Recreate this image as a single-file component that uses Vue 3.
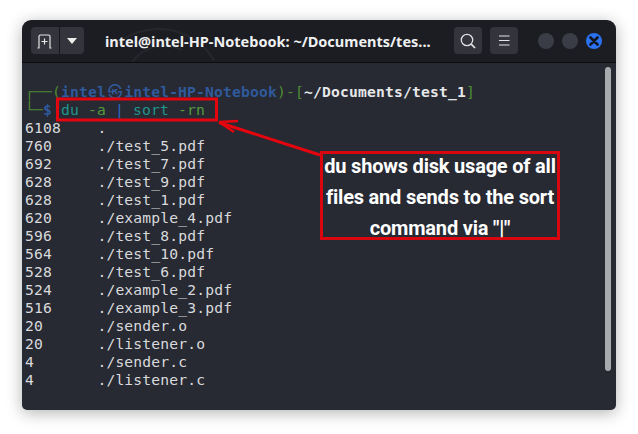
<script setup>
const rows = [
  ['6108', '.'],
  ['760', './test_5.pdf'],
  ['692', './test_7.pdf'],
  ['628', './test_9.pdf'],
  ['628', './test_1.pdf'],
  ['620', './example_4.pdf'],
  ['596', './test_8.pdf'],
  ['564', './test_10.pdf'],
  ['528', './test_6.pdf'],
  ['524', './example_2.pdf'],
  ['516', './example_3.pdf'],
  ['20', './sender.o'],
  ['20', './listener.o'],
  ['4', './sender.c'],
  ['4', './listener.c'],
]
</script>

<template>
  <div class="page">
    <div class="window">
      <header class="titlebar">
        <svg class="watermark" width="110" height="42" viewBox="0 0 110 42" fill="none" stroke="#26272d" stroke-width="2">
          <path d="M2 26C22 8 52 4 76 16c12 6 20 14 26 24" />
          <path d="M20 42C32 26 52 22 70 30" />
        </svg>
        <div class="split">
          <button class="seg seg-new" aria-label="New tab">
            <svg width="18" height="16" viewBox="0 0 18 16" fill="none" stroke="#e4e5e7" stroke-width="1.2">
              <path d="M1.5 15 h1.5 V3.5 a1.5 1.5 0 0 1 1.5-1.5 h8 a1.5 1.5 0 0 1 1.5 1.5 V15 h1.5" />
              <path d="M8.5 5.5 v6 M5.5 8.5 h6" />
            </svg>
          </button>
          <button class="seg seg-drop" aria-label="Tab menu">
            <svg width="10" height="6" viewBox="0 0 10 6"><path d="M0 0h10L5 6z" fill="#eceded" /></svg>
          </button>
        </div>
        <div class="title">intel@intel-HP-Notebook: ~/Documents/tes...</div>
        <button class="tool" aria-label="Search">
          <svg width="16" height="16" viewBox="0 0 16 16" fill="none" stroke="#dfe0e2" stroke-width="1.3">
            <circle cx="7" cy="7" r="5.7" />
            <path d="M11.2 11.2 15 15" stroke-width="1.7" />
          </svg>
        </button>
        <button class="tool tool-menu" aria-label="Menu">
          <svg width="12" height="11" viewBox="0 0 12 11" stroke="#e4e5e7" stroke-width="1.2">
            <path d="M1 1h10.5M1 5.5h10.5M1 10h10.5" />
          </svg>
        </button>
        <div class="controls">
          <span class="dot"></span>
          <span class="dot"></span>
          <span class="dot dot-close">
            <svg width="10" height="10" viewBox="0 0 10 10" stroke="#12141c" stroke-width="2.6" stroke-linecap="round">
              <path d="M1.5 1.5l7 7M8.5 1.5l-7 7" />
            </svg>
          </span>
        </div>
      </header>

      <main class="terminal">
        <div class="scrollbar"></div>
        <div class="output">
          <div class="line"><span class="g">┌──(</span><span class="b">intel<span class="skull">㉿</span>intel-HP-Notebook</span><span class="g">)-[</span><span class="w">~/Documents/test_1</span><span class="g">]</span></div>
          <div class="line"><span class="g">└─</span><span class="b">$</span> <span class="t">du</span> <span class="l">-a</span> <span class="p">|</span> <span class="t">sort</span> <span class="l">-rn</span></div>
          <div v-for="row in rows" :key="row[1]" class="line row">
            <span class="size">{{ row[0] }}</span><span>{{ row[1] }}</span>
          </div>
        </div>
      </main>
    </div>

    <svg class="arrow" width="638" height="434" viewBox="0 0 638 434" fill="none" stroke="#e4060f">
      <rect x="57.5" y="99" width="159" height="21" stroke-width="3" />
      <path d="M320 155 219 122.5" stroke-width="3" />
      <path d="M219 122 238 121M219 122 234 132" stroke-width="2.5" />
    </svg>

    <div class="note">
      <div class="note-text">
        <div>du shows disk usage of all</div>
        <div>files and sends to the sort</div>
        <div>command via "|"</div>
      </div>
    </div>
  </div>
</template>

<style scoped>
.page {
  position: relative;
  width: 638px;
  height: 434px;
  padding: 20px 22px 24px;
  box-sizing: border-box;
  background: #fff;
  overflow: hidden;
}
.window {
  display: flex;
  flex-direction: column;
  height: 390px;
  border-radius: 9px 9px 5px 5px;
  overflow: hidden;
  box-shadow: 0 3px 16px rgba(0, 0, 0, 0.3);
}
.titlebar {
  position: relative;
  display: flex;
  align-items: center;
  height: 43px;
  padding: 0 13px 1px 9px;
  box-sizing: border-box;
  background: #1c1d22;
  border-bottom: 1px solid #0c0c0f;
}
.watermark {
  position: absolute;
  left: 90px;
  top: 0;
}
button {
  position: relative;
  padding: 0;
  border: 0;
  display: flex;
  align-items: center;
  justify-content: center;
  background: #34353c;
}
.split {
  position: relative;
  display: flex;
  gap: 1px;
  width: 53px;
  height: 27px;
  border-radius: 4px;
  overflow: hidden;
  background: #17181b;
}
.seg { height: 27px; }
.seg-new { width: 28px; }
.seg-drop { width: 24px; }
.title {
  position: relative;
  width: 349px;
  margin-left: 21px;
  font: 700 14.5px "Noto Sans", sans-serif;
  color: #eff0f1;
  white-space: nowrap;
}
.tool {
  width: 28px;
  height: 27px;
  border-radius: 4px;
}
.tool-menu { margin-left: 8px; }
.controls {
  position: relative;
  display: flex;
  gap: 8px;
  margin-left: 20px;
}
.dot {
  display: flex;
  align-items: center;
  justify-content: center;
  width: 16px;
  height: 16px;
  border-radius: 50%;
  background: #3b3d46;
}
.dot-close { background: #2a72f0; }
.terminal {
  position: relative;
  flex: 1;
  background: #272933;
}
.scrollbar {
  position: absolute;
  top: 4px;
  right: 5px;
  width: 6px;
  height: 304px;
  border-radius: 3px;
  background: #a8aaad;
}
.output {
  padding: 20px 0 0 3px;
  font: 14.67px/18px "DejaVu Sans Mono", "Noto Sans CJK SC", monospace;
  letter-spacing: 0.17px;
  color: #d9dadb;
}
.line {
  height: 18px;
  white-space: pre;
}
.row { display: flex; }
.size { width: 72.4px; }
.g { color: #4f8c34; }
.b { color: #2f5a9c; font-weight: 700; }
.w { color: #e6e7e8; font-weight: 700; }
.t { color: #1f978c; }
.l { color: #549a3c; }
.p { color: #2f6ac0; }
.skull {
  display: inline-block;
  width: 18.2px;
  text-align: center;
  font-weight: 400;
}
.arrow {
  position: absolute;
  left: 0;
  top: 0;
  pointer-events: none;
}
.note {
  position: absolute;
  left: 320px;
  top: 151px;
  width: 240px;
  height: 89px;
  box-sizing: border-box;
  border: 3px solid #d8060f;
  font: 700 20px/31px Roboto, sans-serif;
  letter-spacing: -0.2px;
  color: #fff;
  text-align: center;
  white-space: nowrap;
}
.note-text { margin-top: -3px; }
</style>

<style>
html, body { margin: 0; background: #fff; }
</style>
